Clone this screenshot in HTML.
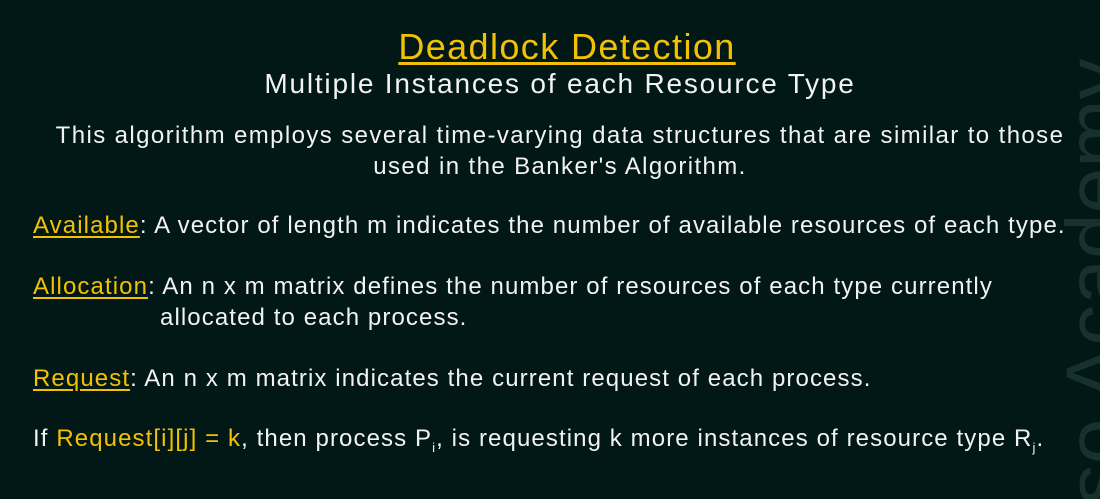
<!DOCTYPE html>
<html style="overflow:hidden;height:499px"><head><style>
body{margin:0;width:1100px;height:499px;background:#011816;overflow:hidden;position:relative;font-family:"Liberation Sans",sans-serif;color:#f2f2f2}
.t{position:absolute;white-space:nowrap}
.y{color:#f3c103}
.u{text-decoration:underline;text-underline-offset:3px}
.b{font-size:24px;letter-spacing:1.1px}
.wc{position:absolute;left:1040px;top:0;width:60px;height:499px;overflow:hidden}
.wm{position:absolute;left:15px;top:610px;transform-origin:0 0;transform:rotate(-90deg);font-size:82px;line-height:82px;color:#17322e;white-space:nowrap}
</style></head><body>
<div class="wc"><div class="wm">Neso Academy</div></div>
<div class="t y u" style="left:34px;width:1066px;text-align:center;top:26px;font-size:36px;letter-spacing:1.4px">Deadlock Detection</div>
<div class="t" style="left:20px;width:1080px;text-align:center;top:68px;font-size:28px;letter-spacing:1.8px">Multiple Instances of each Resource Type</div>
<div class="t" style="left:20px;width:1080px;text-align:center;top:120px;font-size:24px;letter-spacing:1.4px;line-height:31px">This algorithm employs several time-varying data structures that are similar to those<br>used in the Banker's Algorithm.</div>
<div class="t b" style="left:33px;top:212px"><span class="y u">Available</span>: A vector of length m indicates the number of available resources of each type.</div>
<div class="t b" style="left:33px;top:273px"><span class="y u">Allocation</span>: An n x m matrix defines the number of resources of each type currently</div>
<div class="t b" style="left:160px;top:304px">allocated to each process.</div>
<div class="t b" style="left:33px;top:365px"><span class="y u">Request</span>: An n x m matrix indicates the current request of each process.</div>
<div class="t b" style="left:33px;top:425px">If <span class="y">Request[i][j] = k</span>, then process P<sub style="font-size:13px">i</sub>, is requesting k more instances of resource type R<sub style="font-size:13px">j</sub>.</div>
</body></html>
